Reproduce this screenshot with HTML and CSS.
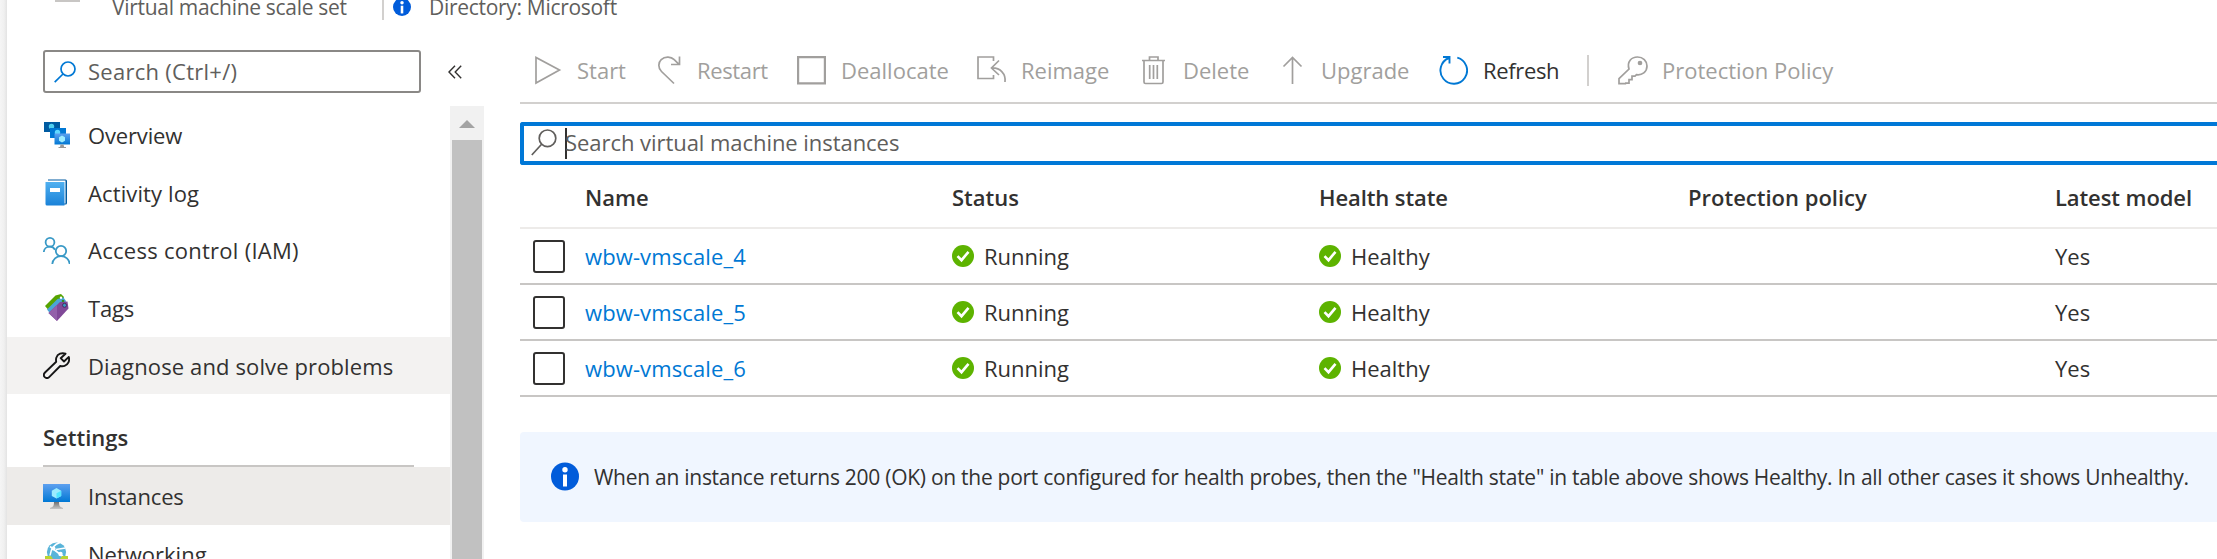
FILE: index.html
```html
<!DOCTYPE html>
<html lang="en">
<head>
<meta charset="utf-8">
<title>Instances</title>
<link rel="stylesheet" href="styles.css">
</head>
<body>
<svg class="defs" width="0" height="0">
  <defs>
    <linearGradient id="blue" x1="0" y1="0" x2="0" y2="1"><stop offset="0" stop-color="#5ea0ef"/><stop offset="1" stop-color="#0078d4"/></linearGradient>
    <linearGradient id="book" x1="0" y1="0" x2="0" y2="1"><stop offset="0" stop-color="#50b0f0"/><stop offset="1" stop-color="#1a82d8"/></linearGradient>
    <linearGradient id="stand" x1="0" y1="0" x2="0" y2="1"><stop offset="0" stop-color="#707070"/><stop offset="1" stop-color="#c8c8c8"/></linearGradient>
    <symbol id="ok" viewBox="0 0 22 22"><circle cx="11" cy="11" r="11" fill="#5db300"/><path d="M5.5 11.2l4 4 7-8.4" fill="none" stroke="#fff" stroke-width="2.6"/></symbol>
    <symbol id="info" viewBox="0 0 28 28"><circle cx="14" cy="14" r="14" fill="#015cda"/><circle cx="14" cy="7.3" r="2.7" fill="#fff"/><path d="M12 12h4v12h-4z" fill="#fff"/></symbol>
  </defs>
</svg>
<div class="blade">
  <header class="head">
    <span class="head-mark"></span>
    <span class="t-type">Virtual machine scale set</span>
    <span class="head-sep"></span>
    <svg class="head-info"><use href="#info"/></svg>
    <span class="t-dir">Directory: Microsoft</span>
  </header>
  <div class="body">
    <aside class="side">
      <div class="side-top">
        <div class="side-search">
          <svg width="22" height="22" viewBox="0 0 22 22" fill="none" stroke="#0078d4" stroke-width="1.7"><circle cx="14" cy="8" r="7"/><path d="M9 13L.7 21.2"/></svg>
          <span class="t-find">Search (Ctrl+/)</span>
        </div>
        <svg class="collapse" width="14" height="14" viewBox="0 0 14 14" fill="none" stroke="#323130" stroke-width="1.4"><path d="M7 .8L1 7l6 6.2M13.2.8L7.200 7l6 6.200"/></svg>
      </div>
      <div class="side-scroll">
        <nav class="menu">
          <div class="item">
            <svg width="27" height="27" viewBox="0 0 27 27"><path d="M1 1h16v10H1z" fill="#005ba1"/><circle cx="8.500" cy="5.500" r="2.700" fill="#50d0f0"/><path d="M7 7h16v10H7z" fill="#0078d4"/><circle cx="14.500" cy="11.500" r="2.700" fill="#60d8ff"/><path d="M11.500 12.500h15.500v11H11.500z" fill="url(#blue)"/><path d="M19 14.500l3 1.700v3.600l-3 1.700-3-1.700v-3.600z" fill="#9cebff"/><path d="M17.500 23.500h3l.7 2.500h1.800v1h-7.500v-1h1.500z" fill="#999"/></svg>
            <span class="t-ov">Overview</span>
          </div>
          <div class="item">
            <svg width="27" height="27" viewBox="0 0 27 27"><path d="M5 .5h17.500q1.500 0 1.500 1.500v22q0 1.500-1.500 1.500H5z" fill="#005ba1"/><path d="M5 1.500h17.500v23H5z" fill="#fff"/><path d="M3 3h18.500v23.500H4q-1.500 0-1.500-1.500V3z" fill="url(#book)"/><path d="M7 9h10v4H7z" fill="#fff"/></svg>
            <span class="t-act">Activity log</span>
          </div>
          <div class="item">
            <svg width="27" height="27" viewBox="0 0 27 27" fill="none" stroke="#3999c6" stroke-width="1.8"><circle cx="7" cy="5.300" r="4.400"/><circle cx="18" cy="14" r="5.200"/><path d="M.8 15c.2-3 2.700-5.300 6.200-5.300 2.300 0 4 1.200 5 3M9.300 27c.4-4.500 4-7.800 8.700-7.800s8.300 3.300 8.700 7.800"/></svg>
            <span class="t-iam">Access control (IAM)</span>
          </div>
          <div class="item">
            <svg width="27" height="27" viewBox="0 0 27 27"><path d="M2 12L12.500 1.500 18 0l3 3-2 7L8 19z" fill="#57a300"/><path d="M4 15.500L14.500 5l6-1.500L23 7l-2 7-11 9z" fill="#4aa5d8"/><path d="M5.500 19L17 8l7.500-.500 1 7L14 27z" fill="#804998"/><path d="M5.500 19L14 11v16z" fill="#9360aa"/><circle cx="18" cy="3.700" r="1.200" fill="#fff"/><circle cx="20" cy="7" r="1.300" fill="#3a8a20"/><circle cx="21.500" cy="11.300" r="2" fill="#3999c6" stroke="#4b2a60"/></svg>
            <span class="t-tags">Tags</span>
          </div>
          <div class="item hover">
            <svg width="27" height="27" viewBox="0 0 27 27" fill="none" stroke="#161616" stroke-width="1.9" stroke-linejoin="round"><path d="M22.500 1.700C19 .4 14.600 1.600 13.300 5.700c-.5 1.600-.3 3-.1 4.100L2 20.500c-1.400 1.400-1.400 3.400-.2 4.600 1.300 1.200 3.300 1.100 4.600-.2L17.200 14c1.500.4 3 .4 4.400-.1 3.600-1.200 5.300-5 4.200-9L21 9.500l-3.300-3.300z"/></svg>
            <span class="t-diag">Diagnose and solve problems</span>
          </div>
          <div class="group"><span class="t-set">Settings</span></div>
          <div class="item selected">
            <svg width="27" height="27" viewBox="0 0 27 27"><path d="M0 1h27v18H0z" fill="url(#blue)"/><path d="M13.500 5l4.700 2.700v5.200l-4.700 2.700-4.700-2.700V7.700z" fill="#9cebff"/><path d="M13.500 10.300l4.700-2.600v5.200l-4.700 2.700z" fill="#50e6ff"/><path d="M11 19h5c0 4 1 5 4 6v1H7v-1c3-1 4-2 4-6z" fill="url(#stand)"/></svg>
            <span class="t-inst">Instances</span>
          </div>
          <div class="item">
            <svg width="27" height="27" viewBox="0 0 27 27"><circle cx="13.500" cy="12" r="9.600" fill="#59b4d9"/><path d="M7 6.500l13 10M17 2.500c-5 1.500-9 6-10 13M13 9.500l9.500-1.500" fill="none" stroke="#fff" stroke-width="1.600"/><circle cx="10.500" cy="8.500" r="2" fill="#fff"/><circle cx="17.500" cy="14" r="2.200" fill="#fff"/><path d="M2 16h6l2 3h7l2-3h6v4H2z" fill="#b8d432"/></svg>
            <span class="t-net">Networking</span>
          </div>
        </nav>
        <div class="bar"><span class="bar-up"></span><span class="bar-thumb"></span></div>
      </div>
    </aside>
    <main class="main">
      <div class="tools">
        <div class="tool start"><svg width="29" height="29" viewBox="0 0 29 29"><path d="M3 1.500v25.500L26.500 14z"/></svg><span class="t-start">Start</span></div>
        <div class="tool restart"><svg width="29" height="29" viewBox="0 0 29 29"><path d="M17 27.500L4.500 15.500C.8 12 1.200 6.500 4.200 3.700 8.200-.2 14.200.6 17.200 3.700L22 8.300M22.500.500v8H14"/></svg><span class="t-restart">Restart</span></div>
        <div class="tool dealloc"><svg width="29" height="29" viewBox="0 0 29 29"><path d="M1.100 1.100h26.800v26.300H1.100z" stroke-width="2.200"/></svg><span class="t-dealloc">Deallocate</span></div>
        <div class="tool reimage"><svg width="30" height="29" viewBox="0 0 30 29"><path d="M16.500 5V1H1v21.500h15.500V19M22 4.500l-7.500 7.500 7.500 7M14.500 12c9-.5 14.500 6 13.500 14"/></svg><span class="t-reimage">Reimage</span></div>
        <div class="tool delete"><svg width="29" height="29" viewBox="0 0 29 29"><path d="M2 4.500h23M9.500 4.500V1H18v3.500M4 4.500V26q0 1.500 1.500 1.500h16q1.500 0 1.500-1.500V4.500M9.700 9v14M13.500 9v14M17.300 9v14"/></svg><span class="t-delete">Delete</span></div>
        <div class="tool upgrade"><svg width="29" height="29" viewBox="0 0 29 29"><path d="M14.500 28V1.500M5.500 10.500l9-9 9 9"/></svg><span class="t-upgrade">Upgrade</span></div>
        <div class="tool refresh"><svg width="29" height="29" viewBox="0 0 29 29"><path d="M18.300 1.600A13.300 13.300 0 1 1 10 2M4 1h6.500v6.500" stroke-width="1.900"/></svg><span class="t-refresh">Refresh</span></div>
        <span class="tool-sep"></span>
        <div class="tool policy"><svg width="30" height="29" viewBox="0 0 30 29"><path d="M11 13C8.700 5.500 13.500 1 19.500 1 25 1 29 5 29 10c0 6-5 9.500-10.500 8.700L17 20.200h-3v3.500h-3v3.500h-3.300l-.2.500H1v-5z"/><circle cx="22" cy="7" r="1.500" fill="#a19f9d"/></svg><span class="t-policy">Protection Policy</span></div>
      </div>
      <div class="filter">
        <svg width="26" height="27" viewBox="0 0 26 27" fill="none" stroke="#605e5c" stroke-width="1.700"><circle cx="16.500" cy="9.300" r="8.300"/><path d="M10.600 15.200L.8 26"/></svg>
        <span class="caret"></span>
        <span class="t-filter">Search virtual machine instances</span>
      </div>
      <div class="grid">
        <div class="row top"><span></span><span><b class="t-name">Name</b></span><span><b class="t-status">Status</b></span><span><b class="t-health">Health state</b></span><span><b class="t-prot">Protection policy</b></span><span><b class="t-model">Latest model</b></span></div>
        <div class="row"><i class="check"></i><a class="t-vm">wbw-vmscale_4</a><span class="state"><svg class="ok"><use href="#ok"/></svg><span class="t-run">Running</span></span><span class="state"><svg class="ok"><use href="#ok"/></svg><span class="t-hea">Healthy</span></span><span></span><span class="t-yes">Yes</span></div>
        <div class="row"><i class="check"></i><a class="t-vm">wbw-vmscale_5</a><span class="state"><svg class="ok"><use href="#ok"/></svg><span class="t-run">Running</span></span><span class="state"><svg class="ok"><use href="#ok"/></svg><span class="t-hea">Healthy</span></span><span></span><span class="t-yes">Yes</span></div>
        <div class="row"><i class="check"></i><a class="t-vm">wbw-vmscale_6</a><span class="state"><svg class="ok"><use href="#ok"/></svg><span class="t-run">Running</span></span><span class="state"><svg class="ok"><use href="#ok"/></svg><span class="t-hea">Healthy</span></span><span></span><span class="t-yes">Yes</span></div>
      </div>
      <div class="banner"><svg width="28" height="29"><use href="#info" width="28" height="29"/></svg><span class="t-note">When an instance returns 200 (OK) on the port configured for health probes, then the "Health state" in table above shows Healthy. In all other cases it shows Unhealthy.</span></div>
    </main>
  </div>
</div>
</body>
</html>
```
FILE: styles.css
```css
* { box-sizing: border-box; }
body { margin: 0; background: #fff; color: #323130; font: 22px/30px "Open Sans", "Noto Sans", sans-serif; white-space: nowrap; }
.defs { display: block; height: 0; }
svg { flex: none; }
.blade { width: 2217px; height: 559px; overflow: hidden; padding-left: 7px; background: linear-gradient(90deg, #f5f5f5 0, #f0f0f0 4px, #e3e3e3 7px, #fff 7px); }
.head { display: flex; height: 50px; color: #605e5c; font-size: 21px; letter-spacing: -0.3px; }
.head > span { margin-top: -8px; }
.head .head-mark { width: 25px; height: 2px; margin: 0 32px 0 48px; background: #c8c6c4; }
.t-type { width: 270px; }
.head .head-sep { width: 2px; height: 20px; margin: 0 9px 0 0; background: #d2d0ce; }
.head-info { width: 18px; height: 18px; margin: -2px 18px 0 0; }
.body { display: flex; height: 509px; }
.side { width: 477px; display: flex; flex-direction: column; }
.side-top { display: flex; align-items: center; gap: 27px; height: 43px; margin: 0 0 13px 36px; }
.side-search { display: flex; align-items: center; gap: 12px; width: 378px; height: 43px; border: 2px solid #8a8886; border-radius: 3px; padding-left: 9px; color: #605e5c; letter-spacing: 0.27px; }
.side-search span, .tool span { padding-bottom: 2px; }
.side-scroll { display: flex; height: 453px; overflow: hidden; }
.menu { width: 443px; }
.item { display: flex; align-items: center; gap: 18px; height: 57.7px; padding-left: 36px; }
.t-iam { letter-spacing: 0.27px; }
.t-act, .t-diag, .t-vm { letter-spacing: 0.12px; }
.t-ov, .t-tags, .t-inst { letter-spacing: -0.15px; }
.hover { background: #f3f2f1; }
.selected { background: #edebe9; }
.group { height: 73px; margin: 0 36px; padding-top: 28px; border-bottom: 2px solid #c8c6c4; font-weight: 600; }
.bar { width: 34px; background: #f1f1f1; display: flex; flex-direction: column; align-items: center; }
.bar-up { height: 8px; margin: 14px 0 12px; border: 8px solid transparent; border-top: 0; border-bottom-color: #a3a3a3; }
.bar-thumb { width: 30px; flex: 1; background: #c1c1c1; }
.main { flex: 1; margin-left: 36px; min-width: 0; }
.tools { display: flex; align-items: center; height: 54px; padding: 0 0 11px 13px; border-bottom: 2px solid #d2d0ce; color: #a19f9d; }
.tool { display: flex; align-items: center; gap: 15px; height: 41px; }
.tool svg { fill: none; stroke: #a19f9d; stroke-width: 1.7; }
.start { width: 124px; }
.restart { width: 140px; gap: 11px; letter-spacing: -0.35px; }
.dealloc { width: 180px; }
.reimage { width: 163px; gap: 14px; }
.delete { width: 138px; gap: 14px; }
.upgrade { width: 161px; gap: 14px; }
.refresh { width: 148px; color: #323130; }
.t-refresh { letter-spacing: -0.35px; }
.refresh svg { stroke: #0078d4; }
.tool-sep { width: 2px; height: 31px; margin-right: 29px; background: #d2d0ce; }
.policy { gap: 14px; }
.filter { display: flex; align-items: center; height: 43px; margin-top: 18px; border: 4px solid #0078d7; border-right: 0; border-radius: 3px 0 0 3px; padding-left: 7px; color: #605e5c; }
.filter svg { margin-top: -2px; }
.caret { width: 2px; height: 31px; margin-left: 8px; background: #323130; }
.t-filter { margin-left: -2px; padding-bottom: 3px; letter-spacing: -0.05px; }
.row { display: grid; grid-template-columns: 65px 367px 367px 369px 367px 1fr; align-items: center; height: 56px; border-bottom: 2px solid #c8c6c4; }
.row.top { height: 64px; padding-top: 2px; border-color: #edebe9; }
.row b { font-weight: 600; }
.t-health, .t-model { letter-spacing: -0.1px; }
.check { width: 32px; height: 33px; margin-left: 13px; border: 2px solid #323130; border-radius: 3px; }
.row a { color: #0078d4; }
.state { display: flex; align-items: center; gap: 10px; }
.ok { width: 22px; height: 22px; margin-top: -1px; }
.banner { display: flex; align-items: center; gap: 15px; height: 90px; margin-top: 35px; padding-left: 31px; border-radius: 4px 0 0 4px; background: #f0f6ff; }
.banner svg { margin-top: -1px; }
.t-note { font-size: 21px; letter-spacing: -0.27px; padding-bottom: 1px; }
```
